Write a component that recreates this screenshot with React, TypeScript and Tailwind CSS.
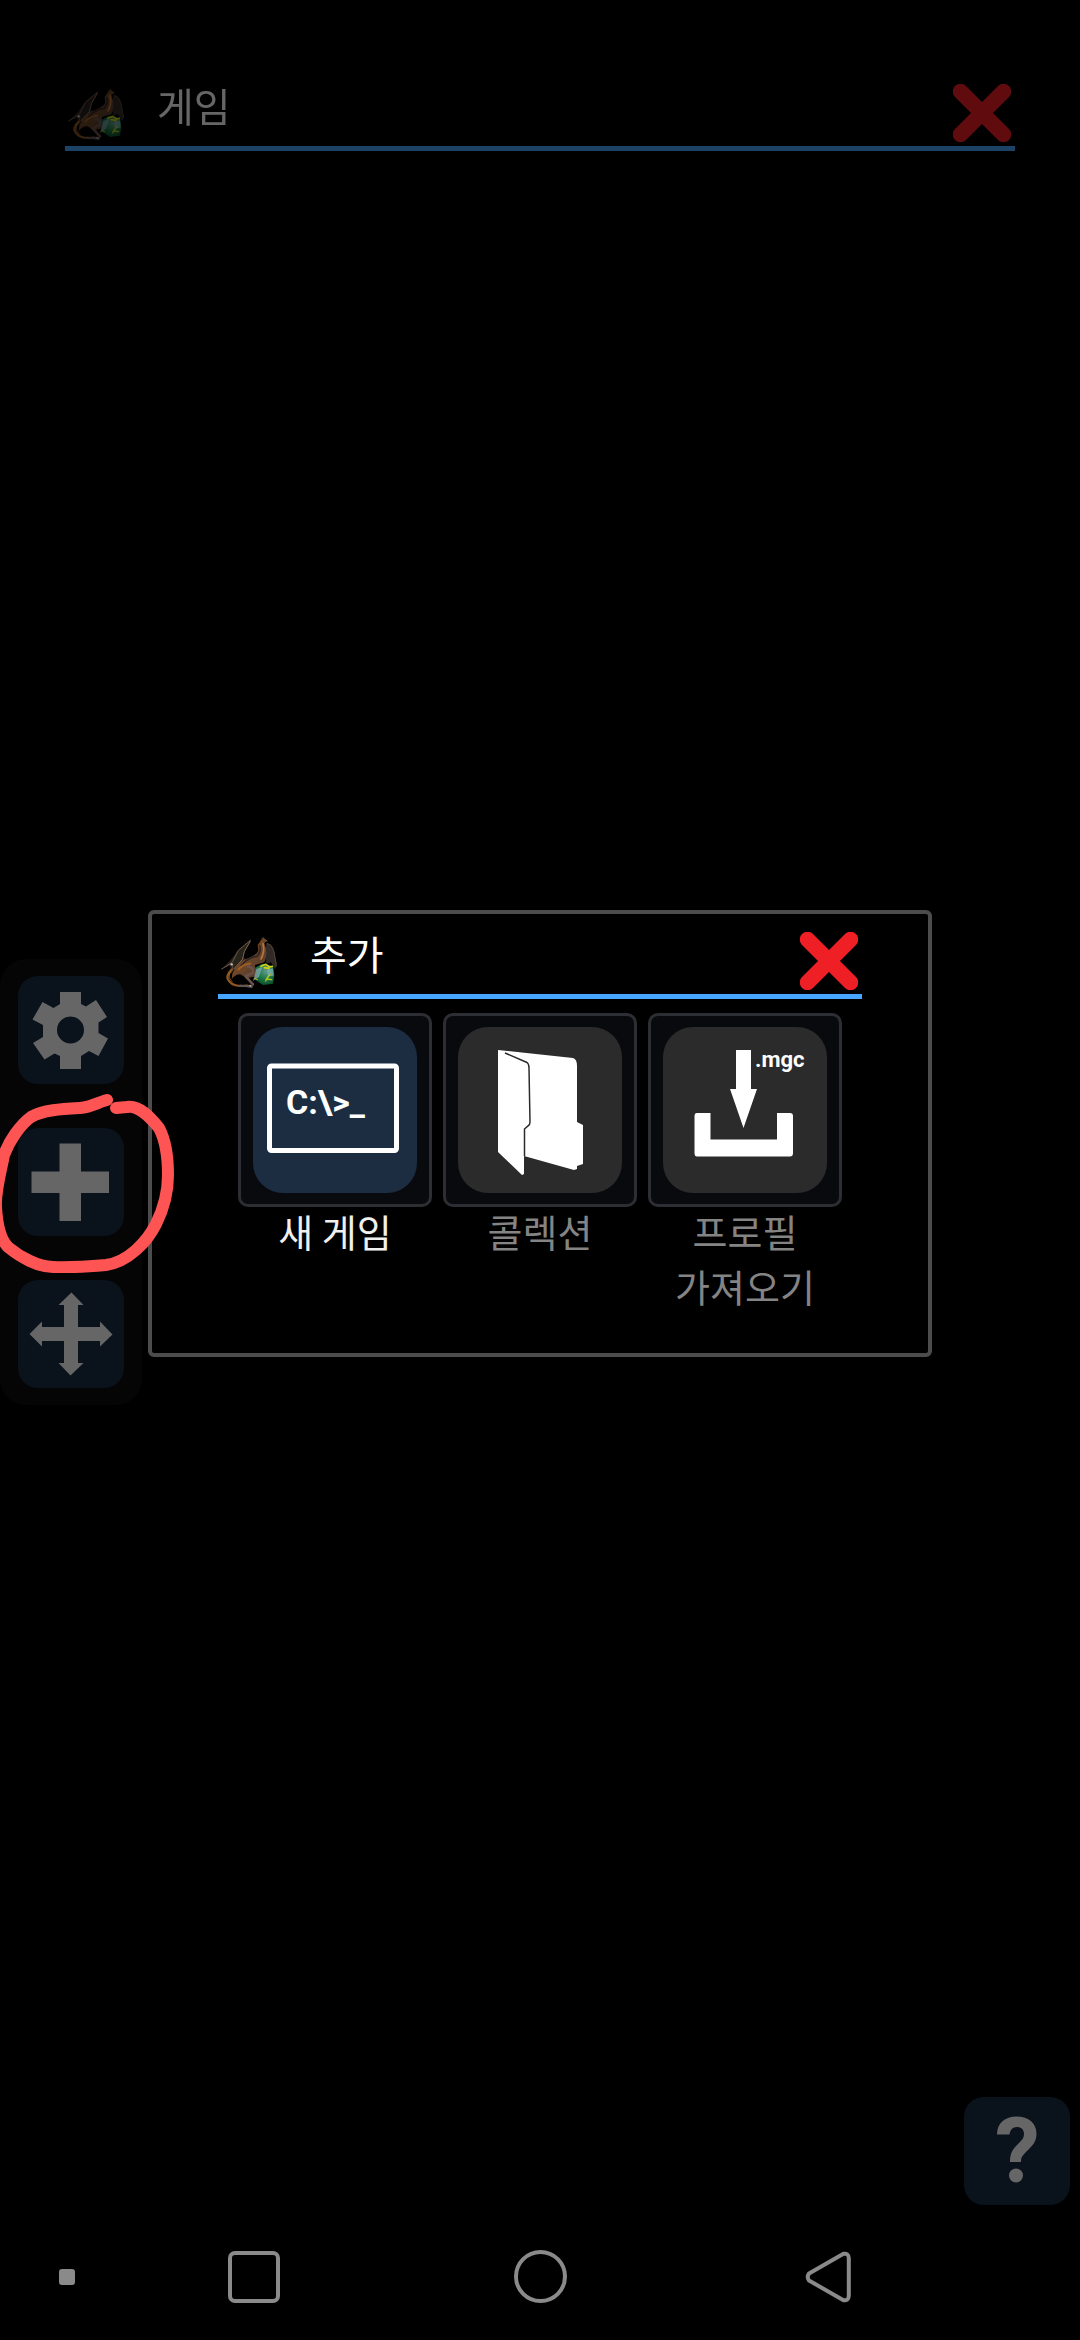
import { useState } from "react";
import type { ReactNode } from "react";

function DragonIcon() {
  return (
    <svg viewBox="45 30 180 165" className="h-[55px] w-[60px] shrink-0" aria-hidden="true">
      <defs>
        <linearGradient id="body" x1="0" y1="0" x2="1" y2="1">
          <stop offset="0" stopColor="#8a5526" />
          <stop offset="0.5" stopColor="#6b4528" />
          <stop offset="1" stopColor="#4a3a30" />
        </linearGradient>
        <radialGradient id="gem" cx="0.55" cy="0.35" r="0.7">
          <stop offset="0" stopColor="#5f9c86" />
          <stop offset="0.5" stopColor="#1f7a4c" />
          <stop offset="1" stopColor="#0a4a26" />
        </radialGradient>
        <filter id="soft">
          <feGaussianBlur stdDeviation="1.4" />
        </filter>
      </defs>
      <g filter="url(#soft)" strokeLinecap="round" strokeLinejoin="round">
        {/* right wing */}
        <path d="M184 56 Q198 52 206 74 L216 122 L210 132 L198 112 L184 116 L180 92 Z" fill="#302b28" />
        <path d="M186 56 Q200 56 207 80 L214 120" fill="none" stroke="#5b4a3e" strokeWidth="2.5" />
        {/* left wing */}
        <path d="M136 46 L98 78 L76 106 L50 132 L74 122 L80 140 L96 128 L124 106 L112 92 Z" fill="#26211f" />
        <path d="M136 46 L100 76 L82 112 L50 132" fill="none" stroke="#735640" strokeWidth="3" />
        <path d="M136 48 L118 80 L112 104 L86 132" fill="none" stroke="#8b6b50" strokeWidth="3" />
        <path d="M84 118 L80 142" fill="none" stroke="#64513f" strokeWidth="2.5" />
        {/* tail */}
        <path d="M80 134 Q58 154 74 170 Q88 186 124 182 L140 184" fill="none" stroke="#8d5720" strokeWidth="7" />
        <path d="M76 142 Q66 158 82 170" fill="none" stroke="#c07a30" strokeWidth="2" />
        <path d="M106 182 L140 186" fill="none" stroke="#565a67" strokeWidth="5" />
        {/* body and neck */}
        <path d="M82 146 Q96 108 132 98 Q158 88 160 76 L158 60 L168 46 L176 38 L186 48 L178 54 Q190 84 178 112 L150 120 L152 154 L126 160 L106 148 Q90 148 80 162 Z" fill="url(#body)" />
        <path d="M174 56 Q180 80 168 102" fill="none" stroke="#b9743b" strokeWidth="5" />
        <path d="M164 62 Q170 80 156 94 Q126 98 108 122" fill="none" stroke="#332824" strokeWidth="5" />
        <path d="M100 134 Q112 118 136 116" fill="none" stroke="#a36123" strokeWidth="5" />
        <path d="M128 124 Q148 128 144 144 L122 154 L144 178" fill="none" stroke="#695148" strokeWidth="8" />
        {/* gem */}
        <path d="M150 128 L172 116 L204 124 L208 150 L204 176 L174 180 L150 164 Z" fill="url(#gem)" />
        <path d="M154 132 L172 126 L162 156 L144 168 Z" fill="#8faab3" opacity="0.7" />
        <path d="M186 134 L204 130 L206 152 L188 154 Z" fill="#91b6c3" opacity="0.65" />
        <path d="M168 124 L182 118 L194 126 L202 124 M178 128 L192 130" fill="none" stroke="#d2cf13" strokeWidth="5" />
        <path d="M196 148 L184 162 L200 164 M188 156 L182 168" fill="none" stroke="#b5c51c" strokeWidth="4" />
        <path d="M148 160 L158 164" fill="none" stroke="#aab81d" strokeWidth="3" />
        <circle cx="80" cy="118" r="3.5" fill="#c4c4c4" />
        <circle cx="136" cy="182" r="3" fill="#a1a8ba" />
        <path d="M170 42 L174 38 M180 44 L186 48" fill="none" stroke="#7b5230" strokeWidth="3" />
      </g>
    </svg>
  );
}

function CloseIcon() {
  return (
    <svg viewBox="0 0 58 58" className="size-[58px]" aria-hidden="true">
      <path d="M7.5 7.5 50.5 50.5M50.5 7.5 7.5 50.5" stroke="#ef1f26" strokeWidth="15.5" strokeLinecap="round" />
    </svg>
  );
}

function TitleBar({ title, onClose }: { title: string; onClose?: () => void }) {
  return (
    <div className="flex items-end border-b-[5px] border-[#47a6ff] pb-1 pr-1 pl-[2px]">
      <DragonIcon />
      <h2 className="ml-[30px] flex-1 pb-2 text-[40px] leading-[58px] text-white">{title}</h2>
      <button type="button" aria-label="닫기" onClick={onClose}>
        <CloseIcon />
      </button>
    </div>
  );
}

function ToolButton({ label, onClick, children }: { label: string; onClick?: () => void; children: ReactNode }) {
  return (
    <button
      type="button"
      aria-label={label}
      onClick={onClick}
      className="h-[108px] w-[106px] shrink-0 overflow-hidden rounded-[20px] bg-[#0a131b] text-[#666666]"
    >
      <svg viewBox="0 0 106 108" className="size-full" fill="currentColor" aria-hidden="true">
        {children}
      </svg>
    </button>
  );
}

function ActionCard({ label, active, children }: { label: string; active?: boolean; children: ReactNode }) {
  return (
    <button type="button" className="flex w-[194px] flex-col items-center">
      <span className="flex h-[194px] w-full items-center justify-center rounded-[10px] border-[3px] border-[#2c2e33] bg-[#090a0e]">
        <span className={`h-[166px] w-[164px] overflow-hidden rounded-[30px] ${active ? "bg-[#1c2d42]" : "bg-[#2b2b2b]"}`}>
          <svg viewBox="0 0 164 166" className="size-full" fill="#ffffff" aria-hidden="true">
            {children}
          </svg>
        </span>
      </span>
      <span className={`-mt-1 whitespace-pre-line text-[38px] leading-[55px] ${active ? "text-[#f0f0f0]" : "text-[#848484]"}`}>
        {label}
      </span>
    </button>
  );
}

export default function App() {
  const [open, setOpen] = useState(true);

  return (
    <div className="relative flex min-h-screen flex-col bg-black font-['Noto_Sans_CJK_KR',sans-serif]">
      <header className="px-[65px] pt-[76px] opacity-40">
        <TitleBar title="게임" />
      </header>

      <main className="flex flex-1 items-center justify-between pr-[10px]">
        <nav className="flex flex-col gap-11 rounded-[26px] bg-[#050505] px-[18px] py-[17px]">
          <ToolButton label="설정">
            <path
              fillRule="evenodd"
              d="M42 16H63V28L68 30.500 78 24 89 41 80.500 46.500V57L90 62.500 80.500 80 71 75 63 80V93H42V80L36.500 77.500 26.500 83.500 15 67 25 61V49L14.500 43.500 24.500 26 35.500 32 42 28ZM52.500 40.500a13.500 13.500 0 1 0 0 27 13.500 13.500 0 1 0 0-27Z"
            />
          </ToolButton>
          <ToolButton label="추가" onClick={() => setOpen(true)}>
            <path d="M41.500 15.500H63V43.500H91V65H63V93H41.500V65H13.500V43.500H41.500Z" />
          </ToolButton>
          <ToolButton label="이동">
            <path d="M53.500 12.500 65.500 25H60V47H82V41.500L94.500 54.500 82 66.500V61H60V83H65.500L52.500 95.500 40.500 83H46V61H24V66.500L11.500 54 24 41.500V47H46V25H40.500Z" />
          </ToolButton>
        </nav>
        <div className="mb-2 flex self-end">
          <ToolButton label="도움말">
            <path d="M33 37.500C33 26 41 19.500 52.500 19.500C65 19.500 72.500 26 72.500 37C72.500 45 68 49 63 54C58.500 58.500 57 60 57 65H46C46 56 48.500 52.500 54 47C58 43 60 41 60 37C60 32.500 57 30 53 30C48.500 30 46 33 45.500 37.500Z" />
            <circle cx="52" cy="78.500" r="7" />
          </ToolButton>
        </div>
      </main>

      <footer className="flex h-[127px] items-center text-[#8a8a8a]">
        <span className="ml-[59px] size-4 rounded-[3px] bg-[#8a8a8a]" />
        <div className="ml-[153px] flex flex-1 items-center">
          <button type="button" aria-label="최근 앱" className="size-[52px] rounded-[7px] border-4 border-[#8a8a8a]" />
          <button type="button" aria-label="홈" className="ml-[234px] size-[53px] rounded-full border-4 border-[#8a8a8a]" />
          <button type="button" aria-label="뒤로" className="ml-[238px]">
            <svg viewBox="0 0 46 52" className="h-[52px] w-[46px]" fill="none" aria-hidden="true">
              <path
                d="M38.500 2.800 4 22.500Q1.500 26 4 29.500L38.500 49.200Q43.500 50 43.800 45V7Q43.500 2 38.500 2.800Z"
                stroke="currentColor"
                strokeWidth="4"
                strokeLinejoin="round"
              />
            </svg>
          </button>
        </div>
      </footer>

      {open && (
        <div className="pointer-events-none absolute inset-0 flex items-center justify-center pb-[73px]">
          <section
            role="dialog"
            aria-label="추가"
            className="pointer-events-auto w-full max-w-[784px] rounded-[6px] border-4 border-[#4c4c4c] bg-black px-[66px] pt-[10px] pb-10"
          >
            <TitleBar title="추가" onClose={() => setOpen(false)} />
            <div className="mt-[14px] flex items-start justify-center gap-[11px]">
              <ActionCard label="새 게임" active>
                <rect x="16.500" y="39" width="127" height="84.500" rx="2" fill="none" stroke="#fff" strokeWidth="5" />
                <text x="33" y="87" fontSize="34" fontWeight="700" fontFamily="Roboto, sans-serif">{"C:\\>_"}</text>
              </ActionCard>
              <ActionCard label="콜렉션">
                <path d="M40 23 115 31Q119 32 119 39V95L125 98V137L119 139V142L116 143 66 129V147L64 148 40 125Z" />
                <path d="M47 26 69 35.500Q71 37 71 41L72 95Q72 98 70 99L66.500 102V129" fill="none" stroke="#2b2b2b" strokeWidth="1.500" />
              </ActionCard>
              <ActionCard label={"프로필\n가져오기"}>
                <path d="M73 23H88V62H94L80.500 101 67 62H73Z" />
                <path d="M34 86H47.500V112.500H114V86H127Q130 86 130 89V126Q130 129.500 127 129.500H34Q31.500 129.500 31.500 126V89Q31.500 86 34 86Z" />
                <text x="92" y="40" fontSize="22" fontWeight="700" fontFamily="Roboto, sans-serif">.mgc</text>
              </ActionCard>
            </div>
          </section>
        </div>
      )}

      {/* hand-drawn marker ring round the add button */}
      <svg viewBox="0 0 180 180" className="pointer-events-none absolute top-[1093px] left-0 size-[180px]" fill="none" aria-hidden="true">
        <path
          d="M107 7C99 9 91 14 80 15C62 16 43 17 31 24C20 32 9 48 4 62C1 78-5 98-4 114C-3 132 0 146 8 154C20 164 38 174 53 174C70 175 94 173 106 172C128 169 147 149 156 131C164 115 168 98 168 82C168 66 166 48 159 35C150 24 139 12 127 14L116 15"
          stroke="#ff5454"
          strokeWidth="12"
          strokeLinecap="round"
          strokeLinejoin="round"
        />
      </svg>
    </div>
  );
}
